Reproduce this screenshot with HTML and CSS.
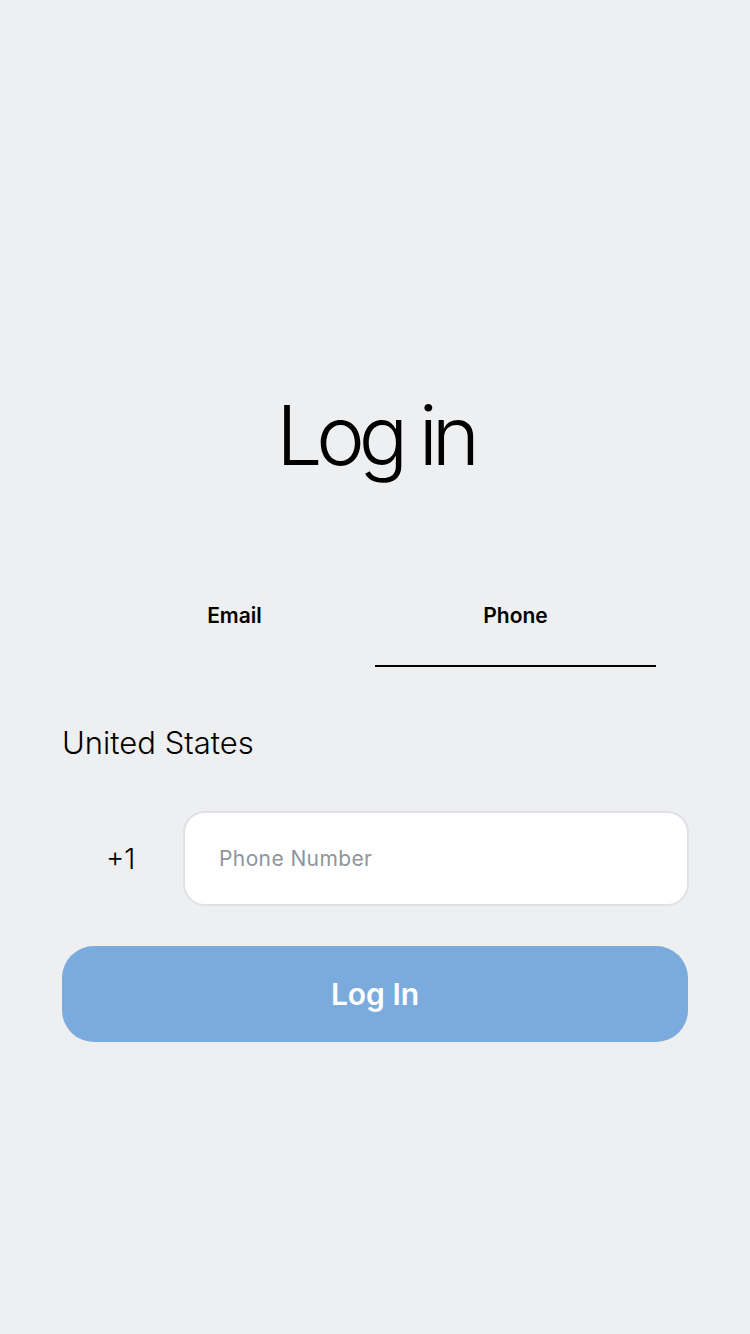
FILE: index.html
```html
<!DOCTYPE html>
<html lang="en">
<head>
<meta charset="utf-8">
<title>Log in</title>
<link rel="stylesheet" href="styles.css">
</head>
<body>
<main class="page">
  <h1 class="title">Log in</h1>
  <nav class="tabs">
    <div class="tab">Email</div>
    <div class="tab active">Phone</div>
  </nav>
  <div class="country">United States</div>
  <div class="phone-row">
    <div class="code">+1</div>
    <div class="input"><span class="placeholder">Phone Number</span></div>
  </div>
  <button class="btn">Log In</button>
</main>
</body>
</html>
```

FILE: styles.css
```css
* { box-sizing: border-box; }
html, body {
  margin: 0;
  padding: 0;
  background: #eeeff1;
  font-family: Inter, "Noto Sans", sans-serif;
  color: #000;
}
.page {
  width: 750px;
  height: 1334px;
  padding: 0 62px;
  display: flex;
  flex-direction: column;
}
.title {
  margin: 386px 0 0;
  font-size: 82px;
  font-weight: 300;
  line-height: 100px;
  text-align: center;
  letter-spacing: -6.2px;
}
.tabs {
  margin: 115px 0 0 32px;
  width: 562px;
  display: grid;
  grid-template-columns: 1fr 1fr;
}
.tab {
  text-align: center;
  font-size: 21px;
  font-weight: 600;
  line-height: 24px;
  padding: 3px 0 0;
  height: 66px;
  border-bottom: 2px solid transparent;
}
.tab.active { border-bottom-color: #000; }
.country {
  margin-top: 56px;
  font-size: 31px;
  font-weight: 300;
  line-height: 40px;
  letter-spacing: 0;
}
.phone-row {
  margin-top: 48px;
  display: flex;
  align-items: center;
}
.code {
  width: 121px;
  padding-left: 44px;
  font-size: 28px;
  font-weight: 300;
}
.input {
  flex: 1;
  height: 95px;
  margin-right: -1px;
  background: #fff;
  border: 2px solid #dfe0e3;
  border-radius: 22px;
  display: flex;
  align-items: center;
  padding-left: 34px;
}
.placeholder {
  color: #8e959d;
  font-size: 21px;
  letter-spacing: 0.4px;
}
.btn {
  margin-top: 40px;
  height: 96px;
  width: 626px;
  border: none;
  border-radius: 32px;
  background: #7aabdc;
  color: #fff;
  font-family: Inter, "Noto Sans", sans-serif;
  font-size: 30px;
  font-weight: 600;
  padding: 0;
}
```
